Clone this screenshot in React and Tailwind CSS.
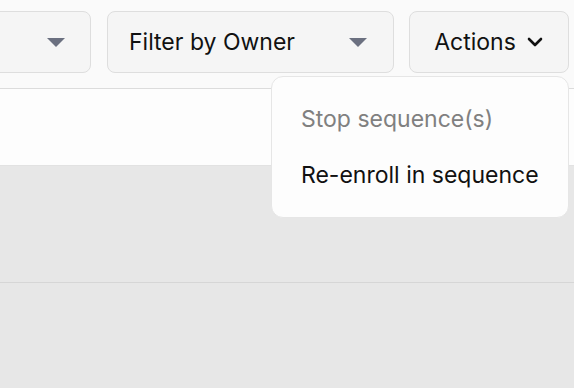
import React from 'react';

const font = { fontFamily: 'Inter, "Noto Sans", sans-serif' };

function Caret() {
  return (
    <svg width="18" height="9" viewBox="0 0 18 9" className="shrink-0">
      <path d="M0 0 L18 0 L9 9 Z" fill="#6b7080" />
    </svg>
  );
}

function Chevron() {
  return (
    <svg width="18" height="12" viewBox="0 0 18 12" fill="none" stroke="#111" strokeWidth="2.6" strokeLinecap="round" strokeLinejoin="round" className="shrink-0">
      <path d="M3 3l6 6 6-6" />
    </svg>
  );
}

export default function App() {
  return (
    <div className="relative w-[574px] h-[388px] overflow-hidden bg-[#fafafa] text-[#111]" style={font}>
      {/* toolbar */}
      <div className="flex justify-end gap-4 pt-[11px] pr-[5px] h-[88px]">
        <button className="shrink-0 w-[220px] h-[62px] flex items-center justify-end pr-[25px] rounded-lg border border-[#dedede] bg-[#f5f5f5]">
          <Caret />
        </button>
        <button className="shrink-0 w-[287px] h-[62px] flex items-center justify-between pl-[21px] pr-[26px] rounded-lg border border-[#dedede] bg-[#f5f5f5] text-[23px]">
          <span>Filter by Owner</span>
          <Caret />
        </button>
        <button className="shrink-0 w-[160px] h-[62px] flex items-center justify-center gap-[10px] rounded-lg border border-[#dedede] bg-[#f5f5f5] text-[23px] -ml-[1px]">
          <span>Actions</span>
          <Chevron />
        </button>
      </div>

      {/* table header row */}
      <div className="h-[77px] border-t border-[#dcdcdc] bg-[#fdfdfd]" />

      {/* body */}
      <div className="h-[117px] border-t border-[#e2e2e2] bg-[#e7e7e7]" />
      <div className="h-[200px] border-t border-[#d6d6d6] bg-[#e7e7e7]" />

      {/* dropdown menu */}
      <div className="absolute left-[271px] top-[76px] w-[298px] h-[142px] rounded-xl border border-[#e6e6e6] bg-[#fdfdfd] flex flex-col justify-center pl-[29px] text-[23px]">
        <div className="h-[56px] flex items-center text-[#808080]">Stop sequence(s)</div>
        <div className="h-[56px] flex items-center text-[#111]">Re-enroll in sequence</div>
      </div>
    </div>
  );
}
